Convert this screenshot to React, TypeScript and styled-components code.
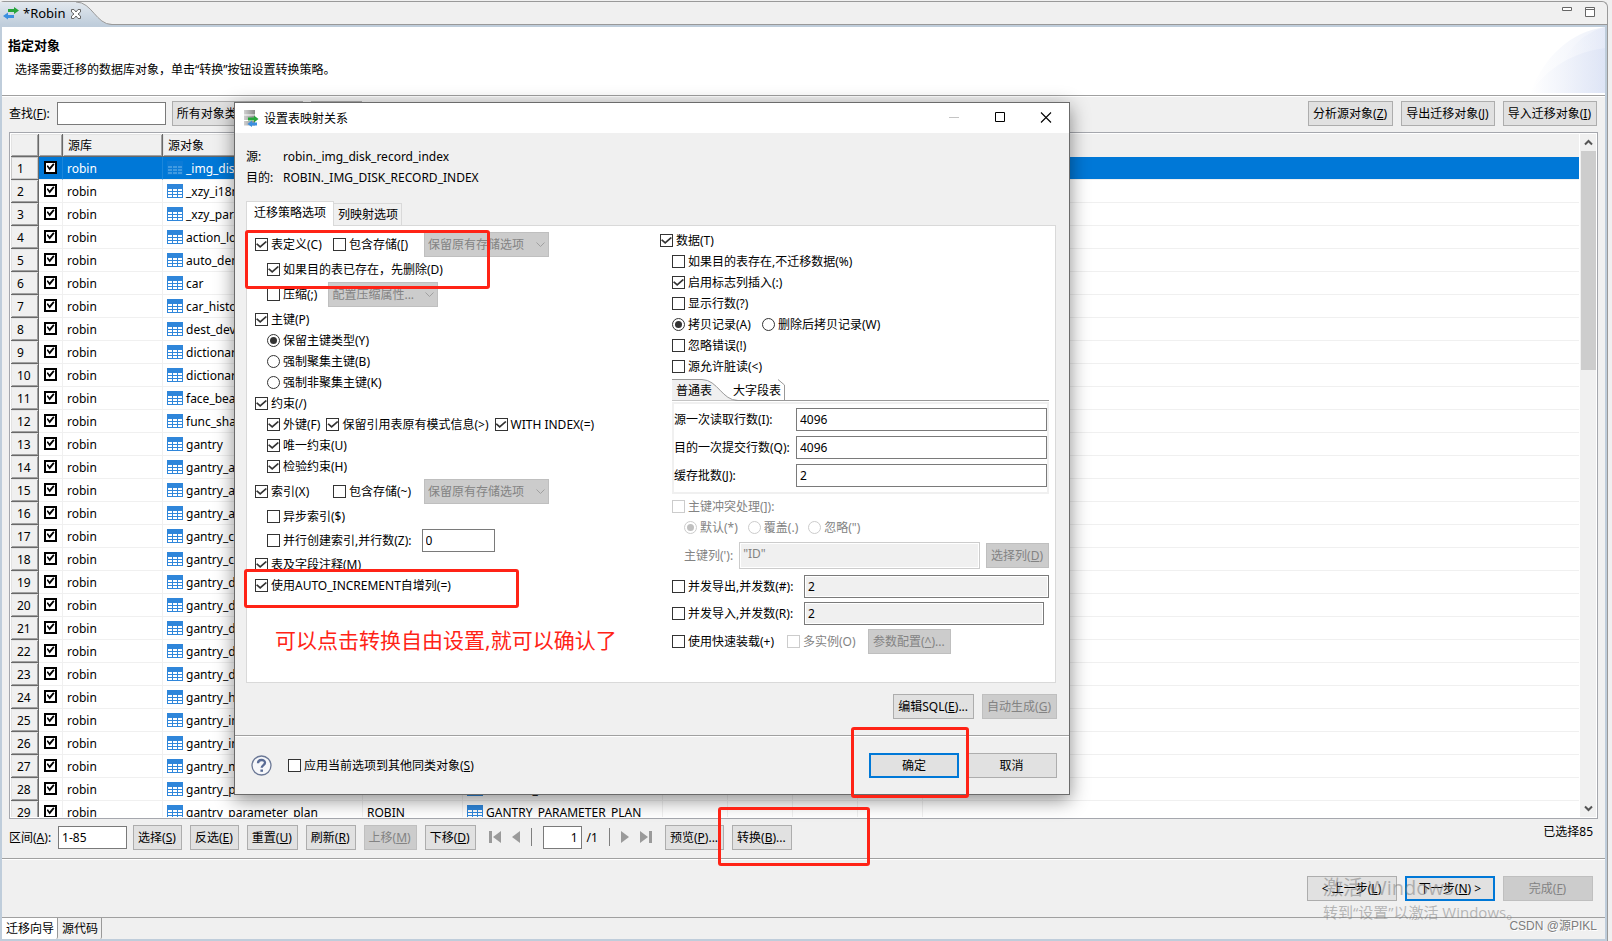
import React, { useId } from "react";
import styled, { createGlobalStyle, css } from "styled-components";

const GlobalStyle = createGlobalStyle`
  * { box-sizing: border-box; }
  body {
    margin: 0;
    background: #f0f0f0;
    color: #000;
    font: 12px/17px "Noto Sans", "Noto Sans CJK SC", sans-serif;
  }
  button, input, select { font: inherit; color: inherit; margin: 0; }
`;

/* ---------- window frame ---------- */

const Page = styled.div`
  display: flex;
  height: 100vh;
  min-height: 600px;
  padding: 1px 4px 0 0;
  position: relative;
  overflow: hidden;
`;

const Frame = styled.div`
  flex: 1;
  min-width: 0;
  display: flex;
  flex-direction: column;
  border-top: 1px solid #999;
  border-right: 1px solid #999;
  border-radius: 4px 6px 0 0;
`;

const EditorTabs = styled.div`
  flex: none;
  height: 23px;
  display: flex;
  justify-content: space-between;
  border-bottom: 1px solid #999;
`;

const EditorTab = styled.div`
  position: relative;
  width: 112px;
  height: 23px;
  display: flex;
  align-items: center;
  gap: 4px;
  padding-left: 3px;

  > * { position: relative; }
  > span { font-size: 13px; }
`;

const TabShape = styled.svg`
  && { position: absolute; left: 0; top: 0; }
`;

const WindowTools = styled.div`
  display: flex;
  align-items: flex-start;
  gap: 13px;
  padding: 5px 12px 0 0;
`;

const PlainButton = styled.button`
  display: flex;
  align-items: center;
  padding: 0;
  border: 0;
  background: none;
`;

const Editor = styled.main`
  flex: 1;
  min-height: 0;
  display: flex;
  flex-direction: column;
  background: #f0f0f0;
  border: 2px solid #bfcddb;
`;

const Banner = styled.header`
  flex: none;
  height: 70px;
  display: flex;
  justify-content: space-between;
  background: #fff;
  border-bottom: 1px solid #fff;
  box-shadow: inset 0 -1px 0 #a0a0a0;
`;

const BannerText = styled.div`
  padding: 9px 0 0 6px;
  h1 { margin: 0 0 7px; font-size: 13px; line-height: 18px; font-weight: 700; }
  p { margin: 0; padding-left: 7px; }
`;

/* ---------- shared controls ---------- */

const Button = styled.button<{ $primary?: boolean; $wide?: boolean }>`
  flex: none;
  height: 25px;
  min-width: ${(p) => (p.$wide ? "90px" : "0")};
  padding: 0 ${(p) => (p.$primary ? "3px" : "5px 0 4px")};
  border: ${(p) => (p.$primary ? "2px solid #0078d7" : "1px solid #adadad")};
  background: #e1e1e1;
  white-space: nowrap;

  &:disabled {
    color: #838383;
    background: #ccc;
    border-color: #bfbfbf;
  }
`;

const TextInput = styled.input<{ $w?: number; $end?: boolean }>`
  height: 23px;
  min-width: 0;
  ${(p) => (p.$w ? css`width: ${p.$w}px; flex: none;` : css`flex: 1;`)}
  padding: 0 3px;
  border: 1px solid #7a7a7a;
  background: #fff;
  text-align: ${(p) => (p.$end ? "right" : "left")};

  &:read-only { background: #f0f0f0; box-shadow: inset 0 0 0 1px #fff; }
  &:disabled {
    height: 27px;
    color: #838383;
    border-color: #ccc;
    background: #f0f0f0;
    padding-bottom: 4px;
  }
`;

const CHECK = "polygon(0 48%, 12% 36%, 38% 64%, 88% 10%, 100% 22%, 38% 90%)";

const Tick = styled.label<{ $w?: number; $off?: boolean }>`
  flex: none;
  display: flex;
  align-items: center;
  gap: 3px;
  white-space: nowrap;
  ${(p) => p.$w && css`width: ${p.$w}px;`}
  color: ${(p) => (p.$off ? "#838383" : "#000")};
`;

const TickBox = styled.input`
  appearance: none;
  flex: none;
  display: grid;
  place-content: center;
  width: 13px;
  height: 13px;
  border: 1px solid #333;
  background: #fff;
  border-radius: ${(p) => (p.type === "radio" ? "50%" : "0")};

  &:checked::after {
    content: "";
    background: #333;
    ${(p) =>
      p.type === "radio"
        ? css`width: 7px; height: 7px; border-radius: 50%;`
        : css`width: 11px; height: 9px; clip-path: ${CHECK};`}
  }
  &:disabled { border-color: #ccc; }
  &:disabled:checked::after { background: #c0c0c0; }
`;

const ComboBox = styled.span<{ $w: number }>`
  position: relative;
  flex: none;
  display: flex;
  width: ${(p) => p.$w}px;
  height: 25px;

  select {
    appearance: none;
    width: 100%;
    padding: 0 20px 0 3px;
    border: 1px solid #bfbfbf;
    border-radius: 0;
    background: #ccc;
    color: #838383;
    opacity: 1;
  }
  svg { position: absolute; right: 4px; top: 10px; }
`;

const Spacer = styled.span`
  flex: 1;
`;

function Mnemonic({ t }: { t: string }) {
  const at = t.indexOf("&");
  if (at < 0) return <>{t}</>;
  return (
    <>
      {t.slice(0, at)}
      <u>{t[at + 1]}</u>
      {t.slice(at + 2)}
    </>
  );
}

type CheckProps = {
  t: string;
  on?: boolean;
  off?: boolean;
  radio?: string;
  w?: number;
};

function Check({ t, on, off, radio, w }: CheckProps) {
  return (
    <Tick $w={w} $off={off}>
      <TickBox
        type={radio ? "radio" : "checkbox"}
        name={radio}
        defaultChecked={on}
        disabled={off}
      />
      <span>
        <Mnemonic t={t} />
      </span>
    </Tick>
  );
}

function Combo({ value, w, name }: { value: string; w: number; name: string }) {
  return (
    <ComboBox $w={w}>
      <select disabled aria-label={name}>
        <option>{value}</option>
      </select>
      <svg width="9" height="6" fill="none" stroke="#a0a0a0">
        <path d="M0.5 0.5l4 4 4-4" />
      </svg>
    </ComboBox>
  );
}

/* ---------- object list ---------- */

const Toolbar = styled.div`
  flex: none;
  display: flex;
  align-items: center;
  height: 35px;
  padding: 0 8px 2px 7px;
  gap: 8px;
`;

const ListBar = styled(Toolbar)`
  height: 39px;
  padding: 0 12px 3px 7px;
`;

const FieldLabel = styled.label`
  flex: none;
  white-space: nowrap;
`;

const Labelled = styled.div`
  display: flex;
  align-items: center;
  gap: 7px;
  margin-right: -2px;
`;

const Count = styled.span`
  align-self: flex-start;
  padding-top: 4px;
`;

const Grid = styled.div`
  flex: 1;
  min-height: 0;
  display: flex;
  margin: 0 7px;
  border: 1px solid #a5a7ad;
  background: #fff;
  padding: 1px;
`;

const GridBody = styled.div`
  flex: 1;
  min-width: 0;
  overflow: hidden;
`;

const Table = styled.table`
  width: 100%;
  table-layout: fixed;
  border-collapse: separate;
  border-spacing: 0;

  th, td { padding: 0; height: 23px; text-align: left; font-weight: 400; white-space: nowrap; overflow: hidden; }
  td { border-bottom: 1px solid #f0f0f0; border-right: 1px solid #f0f0f0; padding-left: 4px; }
  td:last-child { border-right: 0; }
`;

const HeadCell = styled.th<{ $flat?: boolean }>`
  background: #f0f0f0;
  && { padding-left: 5px; }
  ${(p) =>
    !p.$flat &&
    css`
      border-right: 1px solid #696969;
      border-bottom: 1px solid #696969;
      box-shadow: inset 1px 1px 0 #e3e3e3, inset -1px -1px 0 #a0a0a0;
    `}
`;

const RowHead = styled(HeadCell)`
  && { padding-left: 6px; }
`;

const Row = styled.tr<{ $selected?: boolean }>`
  ${(p) =>
    p.$selected &&
    css`
      td { background: #0078d7; color: #fff; border-right-color: #1a86db; }
      svg { opacity: 0.25; }
      th { box-shadow: inset 0 0 0 1px #c8c8c8; }
    `}
`;

const Named = styled.span`
  display: flex;
  align-items: center;
  gap: 3px;
`;

const RowCheck = styled.input`
  appearance: none;
  display: grid;
  place-content: center;
  width: 13px;
  height: 13px;
  border: 2px solid #000;
  background: #fff;

  && { margin: 0 0 2px 1px; }
  &:checked::after {
    content: "";
    width: 8px;
    height: 8px;
    background: #000;
    clip-path: polygon(0 38%, 18% 28%, 38% 56%, 84% 4%, 100% 18%, 40% 94%);
  }
`;

const ScrollBar = styled.div`
  flex: none;
  width: 17px;
  display: flex;
  flex-direction: column;
  align-items: center;
  background: #f0f0f0;
  border-left: 1px solid #fff;
  padding: 5px 0;
`;

const Thumb = styled.div`
  width: 15px;
  height: 32.5%;
  margin: 5px 0 auto;
  background: #cdcdcd;
`;

const Marked = styled.span`
  position: relative;
  display: flex;
`;

const Mark = styled.span<{ $box: string; $h?: number }>`
  position: absolute;
  inset: ${(p) => p.$box};
  ${(p) => p.$h && css`height: ${p.$h}px;`}
  border: 3px solid #ff2316;
  border-radius: 3px;
  pointer-events: none;
  z-index: 2;
`;

const Pager = styled.div`
  display: flex;
  align-items: center;
  gap: 11px;
  padding: 0 5px;
  > span { display: flex; align-items: center; gap: 5px; }
`;

const PagerRule = styled.i`
  width: 1px;
  height: 18px;
  background: #7f7f7f;
`;

const Wizard = styled.footer`
  flex: none;
  display: flex;
  justify-content: flex-end;
  align-items: center;
  gap: 8px;
  height: 59px;
  padding: 0 12px 0 0;
  border-top: 1px solid #a0a0a0;
  box-shadow: inset 0 1px 0 #fff;
`;

const PageTabs = styled.nav`
  flex: none;
  display: flex;
  height: 22px;
  border-top: 1px solid #a0a0a0;
`;

const PageTab = styled.button<{ $active?: boolean }>`
  padding: 0 3px 1px 4px;
  border: 0;
  border-right: 1px solid #999;
  border-radius: 0 0 2px 0;
  background: ${(p) => (p.$active ? "#fff" : "#f0f0f0")};
`;

const Watermark = styled.div`
  position: absolute;
  right: 94px;
  bottom: 17px;
  width: 195px;
  color: rgba(120, 120, 120, 0.5);
  white-space: nowrap;
  pointer-events: none;
  font-family: "Open Sans", "Noto Sans CJK SC", sans-serif;
  strong { display: block; font-weight: 400; font-size: 20px; line-height: 26px; }
  span { display: block; font-size: 15px; line-height: 23px; }
`;

const Credit = styled.div`
  position: absolute;
  right: 15px;
  bottom: 6px;
  font: 12px/18px "Liberation Sans", "Noto Sans CJK SC", sans-serif;
  color: #7d7d7d;
  text-shadow: 1px 1px 0 #fff;
  pointer-events: none;
`;

/* ---------- mapping dialog ---------- */

const Dialog = styled.section`
  position: absolute;
  left: 234px;
  top: 102px;
  width: 836px;
  z-index: 1;
  background: #f0f0f0;
  border: 1px solid #6b6b6b;
  box-shadow: 0 5px 18px rgba(0, 0, 0, 0.45);
`;

const TitleBar = styled.header`
  height: 30px;
  display: flex;
  align-items: center;
  gap: 5px;
  padding: 0 17px 0 9px;
  background: #fff;
  h2 { margin: 0; font-size: 12px; line-height: 17px; font-weight: 400; flex: 1; }
`;

const TitleTools = styled.div`
  display: flex;
  gap: 34px;
`;

const DialogBody = styled.div`
  padding: 15px 12px 16px 11px;
`;

const Mapping = styled.dl`
  display: grid;
  grid-template-columns: 37px 1fr;
  row-gap: 4px;
  margin: 0 0 15px;
  dd { margin: 0; }
`;

const TabRow = styled.div`
  display: flex;
  align-items: flex-end;
`;

const Tab = styled.button<{ $active?: boolean }>`
  height: ${(p) => (p.$active ? "25px" : "22px")};
  padding: ${(p) => (p.$active ? "0 7px 3px" : "0 3px 0 4px")};
  margin-bottom: ${(p) => (p.$active ? "-1px" : "0")};
  border: 1px solid #d9d9d9;
  border-bottom: 0;
  border-left-width: ${(p) => (p.$active ? "1px" : "0")};
  background: ${(p) => (p.$active ? "#fff" : "#f0f0f0")};
  position: relative;
  z-index: ${(p) => (p.$active ? 1 : 0)};
`;

const Panel = styled.div`
  position: relative;
  display: grid;
  grid-template-columns: 405px 1fr;
  margin-right: 1px;
  padding: 6px 6px 28px 8px;
  border: 1px solid #d9d9d9;
  background: #fff;
`;

const Column = styled.div`
  display: flex;
  flex-direction: column;
  gap: 4px;
`;

const Line = styled.div<{ $indent?: number; $gap?: number }>`
  display: flex;
  align-items: center;
  min-height: 17px;
  gap: ${(p) => p.$gap ?? 0}px;
  padding-left: ${(p) => (p.$indent ?? 0) * 12}px;
`;

const KeyLine = styled(Line)`
  margin: 2px 0;
`;

const Note = styled.p`
  position: absolute;
  left: 28px;
  bottom: 27px;
  margin: 0;
  font-size: 21px;
  line-height: 30px;
  color: #ff2316;
`;

const Folder = styled.div`
  margin: 0 0 0 12px;
`;

const FolderTabs = styled.div`
  position: relative;
  display: flex;
  height: 22px;
  border-bottom: 1px solid #999;
`;

const FolderTab = styled.button<{ $w: number }>`
  position: relative;
  width: ${(p) => p.$w}px;
  padding: 2px 0 0 4px;
  text-align: left;
  border: 0;
  background: none;
`;

const FolderBody = styled.div`
  margin-top: 1px;
  padding: 4px 0 5px;
  border: 2px solid #f0f0f0;
  display: grid;
  grid-template-columns: 122px 1fr;
  gap: 5px 0;
  align-items: center;
`;

const Fields = styled.div`
  display: flex;
  flex-direction: column;
  gap: 4px;
  padding-top: 4px;
  padding-left: 12px;
`;

const ReadField = styled.div<{ $end?: number }>`
  display: grid;
  grid-template-columns: 132px 1fr;
  align-items: center;
  padding-right: ${(p) => p.$end ?? 0}px;
`;

const Actions = styled.div`
  display: flex;
  justify-content: flex-end;
  gap: 8px;
  margin-top: 11px;
`;

const DialogFooter = styled.footer`
  display: flex;
  align-items: center;
  gap: 8px;
  height: 59px;
  padding: 0 12px 0 16px;
  border-top: 1px solid #a0a0a0;
  box-shadow: inset 0 1px 0 #fff;
`;

const HelpButton = styled(PlainButton)`
  margin-right: 8px;
`;

/* ---------- icons ---------- */

const SwapIcon = () => (
  <svg width="16" height="13" viewBox="0 0 16 13">
    <path d="M5 2h6V0l5 3.500-5 3.500V5H5z" fill="#27a53b" />
    <path d="M11 8H5V5.500L0 9l5 3.500V11h6z" fill="#3b8fe0" />
  </svg>
);

const TableIcon = () => (
  <svg width="16" height="14" viewBox="0 0 16 14">
    <path fill="#2f86da" d="M0 0h16v14H0z" />
    <path
      fill="#fff"
      d="M1 5h4v2H1zM6 5h4v2H6zM11 5h4v2h-4zM1 8h4v2H1zM6 8h4v2H6zM11 8h4v2h-4zM1 11h4v2H1zM6 11h4v2H6zM11 11h4v2h-4z"
    />
  </svg>
);

const DialogIcon = () => (
  <svg width="15" height="17" viewBox="0 0 15 17">
    <defs>
      <linearGradient id="slab">
        <stop stopColor="#d0d0d0" />
        <stop offset="1" stopColor="#8a8a8a" />
      </linearGradient>
    </defs>
    <path fill="url(#slab)" d="M0 0h11v4.500H0zM0 5.500h11v4.500H0zM0 11h11v4.500H0z" />
    <path fill="#27a53b" d="M4 7.500h6V5.500l4.500 3.500-4.500 3.500v-2H4z" />
    <path fill="#3b8fe0" d="M13 12.500H8V10.500l-4.500 3.500L8 17v-1.500h5z" />
  </svg>
);

const HelpIcon = () => (
  <svg width="21" height="21" viewBox="0 0 21 21" fill="none">
    <circle cx="10.500" cy="10.500" r="9.500" fill="#f6f7fa" stroke="#6b7896" strokeWidth="1.300" />
    <path d="M7 8.300c0-4.300 7-4.300 7-.5 0 2.300-3.300 2.300-3.300 5" stroke="#5a6c96" strokeWidth="2.300" />
    <path d="M9.400 14.500h2.600v2.300H9.400z" fill="#5a6c96" />
  </svg>
);

const Chevron = ({ down }: { down?: boolean }) => (
  <svg width="9" height="7" viewBox="0 0 9 7" fill="none" stroke="#555" strokeWidth="2">
    <path d={down ? "M1 1.500l3.500 3.500L8 1.500" : "M1 5.500L4.500 2 8 5.500"} />
  </svg>
);

const PageIcon = ({ d, w }: { d: string; w: number }) => (
  <svg width={w} height="12" viewBox={`0 0 ${w} 12`} fill="#9a9a9a">
    <path d={d} />
  </svg>
);

/* ---------- data ---------- */

const objects = [
  "_img_disk_record_index", "_xzy_i18n", "_xzy_param", "action_log", "auto_demo",
  "car", "car_history", "dest_device", "dictionary", "dictionary_item",
  "face_bead", "func_share", "gantry", "gantry_a", "gantry_a",
  "gantry_a", "gantry_c", "gantry_c", "gantry_d", "gantry_d",
  "gantry_d", "gantry_d", "gantry_d", "gantry_h", "gantry_in",
  "gantry_in", "gantry_m", "gantry_p", "gantry_parameter_plan",
];

const columns = [28, 24, 100, 200, 100, 200, 65, 65, 65, 65];
const headings = ["", "", "源库", "源对象", "目的库", "目的对象", "", "", "", ""];

function ObjectTable() {
  return (
    <Table>
      <colgroup>
        {columns.map((w, i) => (
          <col key={i} width={w} />
        ))}
        <col />
      </colgroup>
      <thead>
        <tr>
          {headings.map((h, i) => (
            <HeadCell key={i}>{h}</HeadCell>
          ))}
          <HeadCell $flat />
        </tr>
      </thead>
      <tbody>
        {objects.map((name, i) => (
          <Row key={i} $selected={i === 0}>
            <RowHead scope="row">{i + 1}</RowHead>
            <td>
              <RowCheck type="checkbox" defaultChecked aria-label={name} />
            </td>
            <td>robin</td>
            <td>
              <Named>
                <TableIcon />
                {name}
              </Named>
            </td>
            <td>ROBIN</td>
            <td>
              <Named>
                <TableIcon />
                {name.toUpperCase()}
              </Named>
            </td>
            <td />
            <td />
            <td />
            <td />
            <td />
          </Row>
        ))}
      </tbody>
    </Table>
  );
}

function MappingDialog() {
  const id = useId();
  return (
    <Dialog role="dialog" aria-labelledby={id + "t"}>
      <TitleBar>
        <DialogIcon />
        <h2 id={id + "t"}>设置表映射关系</h2>
        <TitleTools>
          <PlainButton aria-label="最小化" disabled>
            <svg width="12" height="12" stroke="#c4c4c4"><path d="M1 5.500h10" /></svg>
          </PlainButton>
          <PlainButton aria-label="最大化">
            <svg width="12" height="12" fill="none" stroke="#000"><path d="M1.500 .5h9v9h-9z" /></svg>
          </PlainButton>
          <PlainButton aria-label="关闭">
            <svg width="12" height="12" stroke="#000" strokeWidth="1.100"><path d="M1 .5l10 10M11 .5L1 10.500" /></svg>
          </PlainButton>
        </TitleTools>
      </TitleBar>
      <DialogBody>
        <Mapping>
          <dt>源:</dt>
          <dd>robin._img_disk_record_index</dd>
          <dt>目的:</dt>
          <dd>ROBIN._IMG_DISK_RECORD_INDEX</dd>
        </Mapping>
        <TabRow>
          <Tab $active>迁移策略选项</Tab>
          <Tab>列映射选项</Tab>
        </TabRow>
        <Panel>
          <Column>
            <Line>
              <Check t="表定义(C)" on w={78} />
              <Check t="包含存储([)" w={91} />
              <Combo value="保留原有存储选项" w={125} name="表存储选项" />
            </Line>
            <Line $indent={1}>
              <Check t="如果目的表已存在，先删除(D)" on />
            </Line>
            <Line $indent={1} $gap={11}>
              <Check t="压缩(;)" />
              <Combo value="配置压缩属性..." w={110} name="压缩属性" />
            </Line>
            <Line><Check t="主键(P)" on /></Line>
            <Line $indent={1}><Check t="保留主键类型(Y)" radio="pk" on /></Line>
            <Line $indent={1}><Check t="强制聚集主键(B)" radio="pk" /></Line>
            <Line $indent={1}><Check t="强制非聚集主键(K)" radio="pk" /></Line>
            <Line><Check t="约束(/)" on /></Line>
            <Line $indent={1} $gap={6}>
              <Check t="外键(F)" on />
              <Check t="保留引用表原有模式信息(>)" on />
              <Check t="WITH INDEX(=)" on />
            </Line>
            <Line $indent={1}><Check t="唯一约束(U)" on /></Line>
            <Line $indent={1}><Check t="检验约束(H)" on /></Line>
            <Line>
              <Check t="索引(X)" on w={78} />
              <Check t="包含存储(~)" w={91} />
              <Combo value="保留原有存储选项" w={125} name="索引存储选项" />
            </Line>
            <Line $indent={1}><Check t="异步索引($)" /></Line>
            <Line $indent={1} $gap={10}>
              <Check t="并行创建索引,并行数(Z):" />
              <TextInput $w={73} defaultValue="0" aria-label="并行数" />
            </Line>
            <Line><Check t="表及字段注释(M)" on /></Line>
            <Line><Check t="使用AUTO_INCREMENT自增列(=)" on /></Line>
          </Column>
          <div>
            <Column>
              <Line><Check t="数据(T)" on /></Line>
              <Line $indent={1}><Check t="如果目的表存在,不迁移数据(%)" /></Line>
              <Line $indent={1}><Check t="启用标志列插入(:)" on /></Line>
              <Line $indent={1}><Check t="显示行数(?)" /></Line>
              <Line $indent={1} $gap={11}>
                <Check t="拷贝记录(A)" radio="copy" on />
                <Check t="删除后拷贝记录(W)" radio="copy" />
              </Line>
              <Line $indent={1}><Check t="忽略错误(!)" /></Line>
              <Line $indent={1}><Check t="源允许脏读(<)" /></Line>
              <Folder>
                <FolderTabs>
                  <TabShape width="116" height="22" fill="none">
                    <path d="M0 0.500H30C46 1 50 21.500 66 21.500H0z" fill="#f0f0f0" />
                    <path d="M0 0.500H30C46 1 50 21.500 66 21.500M106 .5L112.500 6V22" stroke="#999" />
                  </TabShape>
                  <FolderTab $w={57}>普通表</FolderTab>
                  <FolderTab $w={60}>大字段表</FolderTab>
                </FolderTabs>
                <FolderBody>
                  <FieldLabel htmlFor={id + "r"}>源一次读取行数(I):</FieldLabel>
                  <TextInput id={id + "r"} defaultValue="4096" />
                  <FieldLabel htmlFor={id + "c"}>目的一次提交行数(Q):</FieldLabel>
                  <TextInput id={id + "c"} defaultValue="4096" />
                  <FieldLabel htmlFor={id + "b"}>缓存批数(J):</FieldLabel>
                  <TextInput id={id + "b"} defaultValue="2" />
                </FolderBody>
              </Folder>
            </Column>
            <Fields>
              <Line><Check t="主键冲突处理(]):" off /></Line>
              <Line $indent={1} $gap={10}>
                <Check t="默认(*)" radio="clash" on off />
                <Check t="覆盖(.)" radio="clash" off />
                <Check t={'忽略(")'} radio="clash" off />
              </Line>
              <KeyLine $indent={1} $gap={6}>
                <Tick htmlFor={id + "k"} $off>主键列('):</Tick>
                <TextInput id={id + "k"} defaultValue={'"ID"'} disabled />
                <Button disabled><Mnemonic t="选择列(&D)" /></Button>
              </KeyLine>
              <ReadField>
                <Check t="并发导出,并发数(#):" />
                <TextInput defaultValue="2" readOnly aria-label="导出并发数" />
              </ReadField>
              <ReadField $end={5}>
                <Check t="并发导入,并发数(R):" />
                <TextInput defaultValue="2" readOnly aria-label="导入并发数" />
              </ReadField>
              <Line>
                <Check t="使用快速装载(+)" w={115} />
                <Check t="多实例(O)" off w={81} />
                <Button disabled><Mnemonic t="参数配置(&^)..." /></Button>
              </Line>
            </Fields>
          </div>
          <Mark $box="4px 565px auto -2px" $h={59} />
          <Mark $box="343px 536px auto -3px" $h={39} />
          <Note>可以点击转换自由设置,就可以确认了</Note>
        </Panel>
        <Actions>
          <Button><Mnemonic t="编辑SQL(&E)..." /></Button>
          <Button disabled><Mnemonic t="自动生成(&G)" /></Button>
        </Actions>
      </DialogBody>
      <DialogFooter>
        <HelpButton aria-label="帮助"><HelpIcon /></HelpButton>
        <Check t="应用当前选项到其他同类对象(&S)" />
        <Spacer />
        <Marked>
          <Button $primary $wide>确定</Button>
          <Mark $box="-26px -10px -20px -18px" />
        </Marked>
        <Button $wide>取消</Button>
      </DialogFooter>
    </Dialog>
  );
}

export default function App() {
  const id = useId();
  return (
    <Page>
      <GlobalStyle />
      <Frame>
        <EditorTabs>
          <EditorTab>
            <TabShape width="114" height="23" fill="none">
              <defs>
                <linearGradient id="tabfill" x2="0" y2="1">
                  <stop stopColor="#e2e8ee" />
                  <stop offset="1" stopColor="#bfcddb" />
                </linearGradient>
              </defs>
              <path d="M0 0H76C92 0 96 22.500 112 22.500V23H0z" fill="url(#tabfill)" />
              <path d="M76 0C92 0 96 22.500 112 22.500" stroke="#999" />
            </TabShape>
            <SwapIcon />
            <span>*Robin</span>
            <PlainButton aria-label="关闭">
              <svg width="12" height="12" fill="#fff" stroke="#666">
                <path d="M1.500 1.500h2.500l2 2.500 2-2.500h2.500v2.500L8 6l2.500 2v2.500H8L6 8l-2 2.500H1.500V8L4 6 1.500 4z" />
              </svg>
            </PlainButton>
          </EditorTab>
          <WindowTools>
            <PlainButton aria-label="最小化">
              <svg width="10" height="4" fill="#fff" stroke="#666"><path d="M.5 .5h9v3h-9z" /></svg>
            </PlainButton>
            <PlainButton aria-label="最大化">
              <svg width="10" height="10" fill="#fff" stroke="#666"><path d="M.5 .5h9v9h-9zM.5 2.500h9" /></svg>
            </PlainButton>
          </WindowTools>
        </EditorTabs>
        <Editor>
          <Banner>
            <BannerText>
              <h1>指定对象</h1>
              <p>选择需要迁移的数据库对象，单击“转换”按钮设置转换策略。</p>
            </BannerText>
            <svg width="75" height="66" viewBox="0 0 75 66">
              <defs>
                <linearGradient id="sky">
                  <stop stopColor="#fff" />
                  <stop offset="1" stopColor="#dce3f5" />
                </linearGradient>
              </defs>
              <path d="M0 66C14 30 40 5 75 0V66z" fill="url(#sky)" opacity=".5" />
              <path d="M22 66C28 35 45 8 75 0V66z" fill="url(#sky)" opacity=".5" />
              <path d="M0 66C18 40 44 25 75 21V66z" fill="url(#sky)" opacity=".8" />
            </svg>
          </Banner>
          <Toolbar>
            <Labelled>
              <FieldLabel htmlFor={id + "f"}><Mnemonic t="查找(&F):" /></FieldLabel>
              <TextInput id={id + "f"} $w={109} />
            </Labelled>
            <Button>所有对象类型和数据源</Button>
            <Button>查询(Q)</Button>
            <Spacer />
            <Button><Mnemonic t="分析源对象(&Z)" /></Button>
            <Button><Mnemonic t="导出迁移对象(&J)" /></Button>
            <Button><Mnemonic t="导入迁移对象(&I)" /></Button>
          </Toolbar>
          <Grid>
            <GridBody><ObjectTable /></GridBody>
            <ScrollBar>
              <Chevron />
              <Thumb />
              <Chevron down />
            </ScrollBar>
          </Grid>
          <ListBar>
            <Labelled>
              <FieldLabel htmlFor={id + "i"}><Mnemonic t="区间(&A):" /></FieldLabel>
              <TextInput id={id + "i"} $w={69} defaultValue="1-85" />
            </Labelled>
            <Button><Mnemonic t="选择(&S)" /></Button>
            <Button><Mnemonic t="反选(&E)" /></Button>
            <Button><Mnemonic t="重置(&U)" /></Button>
            <Button><Mnemonic t="刷新(&R)" /></Button>
            <Button disabled><Mnemonic t="上移(&M)" /></Button>
            <Button><Mnemonic t="下移(&D)" /></Button>
            <Pager>
              <PlainButton aria-label="首页"><PageIcon w={12} d="M0 0h3v12H0zM12 0v12L4 6z" /></PlainButton>
              <PlainButton aria-label="上一页"><PageIcon w={8} d="M8 0v12L0 6z" /></PlainButton>
              <PagerRule />
              <span>
                <TextInput $w={39} $end defaultValue="1" aria-label="页码" />
                /1
              </span>
              <PagerRule />
              <PlainButton aria-label="下一页"><PageIcon w={8} d="M0 0v12l8-6z" /></PlainButton>
              <PlainButton aria-label="末页"><PageIcon w={12} d="M0 0v12l8-6zM9 0h3v12H9z" /></PlainButton>
            </Pager>
            <Button><Mnemonic t="预览(&P)..." /></Button>
            <Marked>
              <Button><Mnemonic t="转换(&B)..." /></Button>
              <Mark $box="-18px -78px -16px -14px" />
            </Marked>
            <Spacer />
            <Count>已选择85</Count>
          </ListBar>
          <Wizard>
            <Button $wide><Mnemonic t="< 上一步(&L)" /></Button>
            <Button $wide $primary><Mnemonic t="下一步(&N) >" /></Button>
            <Button $wide disabled><Mnemonic t="完成(&F)" /></Button>
          </Wizard>
          <PageTabs>
            <PageTab $active>迁移向导</PageTab>
            <PageTab>源代码</PageTab>
          </PageTabs>
        </Editor>
      </Frame>
      <MappingDialog />
      <Watermark>
        <strong>激活 Windows</strong>
        <span>转到“设置”以激活 Windows。</span>
      </Watermark>
      <Credit>CSDN @源PIKL</Credit>
    </Page>
  );
}
